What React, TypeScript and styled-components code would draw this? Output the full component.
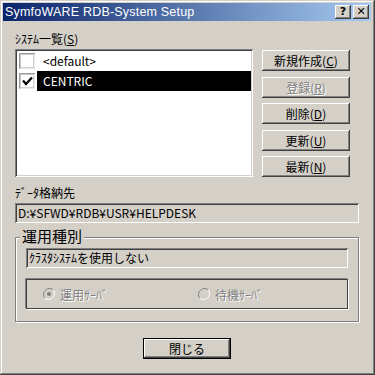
import React from "react";
import styled, { createGlobalStyle } from "styled-components";

const Global = createGlobalStyle`
  html, body {
    margin: 0;
    padding: 0;
    background: #d4d0c8;
  }
  body {
    font-family: "Noto Sans CJK JP", sans-serif;
    font-size: 12px;
  }
`;

const face = `"Noto Sans CJK JP", "Liberation Sans", sans-serif`;

const Window = styled.div`
  width: 375px;
  height: 375px;
  box-sizing: border-box;
  padding: 3px 4px 4px 3px;
  background: #d4d0c8;
  box-shadow: inset -1px -1px #404040, inset 1px 1px #d4d0c8,
    inset -2px -2px #808080, inset 2px 2px #fff;
  display: flex;
  flex-direction: column;
`;

const TitleBar = styled.div`
  height: 18px;
  display: flex;
  align-items: center;
  padding: 0 2px 0 2px;
  background: linear-gradient(to right, #0a246a, #a6caf0);
`;

const TitleText = styled.div`
  flex: 1;
  color: #fff;
  font-family: "Liberation Sans", sans-serif;
  font-size: 12.5px;
  line-height: 18px;
  letter-spacing: 0.2px;
`;

const TitleButton = styled.div`
  width: 16px;
  height: 14px;
  margin-left: 2px;
  background: #d4d0c8;
  box-shadow: inset -1px -1px #404040, inset 1px 1px #fff,
    inset -2px -2px #808080;
  display: flex;
  align-items: center;
  justify-content: center;
  font-family: "DejaVu Sans", sans-serif;
  font-weight: bold;
  font-size: 11px;
  line-height: 14px;
  color: #000;
`;

const Body = styled.div`
  display: flex;
  flex-direction: column;
  padding: 0 9px 0 12px;
`;

const Label = styled.div<{ $top: number }>`
  margin-top: ${(p) => p.$top}px;
  height: 16px;
  line-height: 16px;
  font-family: ${face};
  font-size: 12px;
  color: #000;
`;

const Row = styled.div`
  display: flex;
  align-items: flex-start;
  height: 128px;
  margin-top: 2px;
`;

const ListBox = styled.div`
  width: 238px;
  height: 128px;
  box-sizing: border-box;
  padding: 2px;
  background: #fff;
  box-shadow: inset 1px 1px #808080, inset -1px -1px #fff,
    inset 2px 2px #404040, inset -2px -2px #d4d0c8;
`;

const ListItem = styled.div`
  height: 20px;
  display: flex;
  align-items: center;
  padding-left: 2px;
`;

const CheckBox = styled.div`
  width: 16px;
  height: 16px;
  box-sizing: border-box;
  background: #fff;
  box-shadow: inset 1px 1px #9a9a9a, inset -1px -1px #e8e8e8,
    inset 2px 2px #c8c8c8, inset -2px -2px #d4d0c8;
  display: flex;
  align-items: center;
  justify-content: center;
`;

const ItemText = styled.div<{ $selected?: boolean }>`
  flex: 1;
  margin-left: 2px;
  height: 20px;
  line-height: 20px;
  padding-left: 6px;
  font-family: ${face};
  font-size: 12px;
  background: ${(p) => (p.$selected ? "#000" : "transparent")};
  color: ${(p) => (p.$selected ? "#fff" : "#000")};
`;

const ButtonColumn = styled.div`
  display: flex;
  flex-direction: column;
  gap: 5.5px;
  margin-left: 9px;
  padding-top: 1px;
`;

const Button = styled.div<{ $disabled?: boolean; $default?: boolean }>`
  width: 88px;
  height: 21px;
  box-sizing: border-box;
  background: #d4d0c8;
  display: flex;
  align-items: center;
  justify-content: center;
  font-family: ${face};
  font-size: 12px;
  color: ${(p) => (p.$disabled ? "#808080" : "#000")};
  text-shadow: ${(p) => (p.$disabled ? "1px 1px #fff" : "none")};
  box-shadow: ${(p) =>
    p.$default
      ? "inset 0 0 0 1px #000, inset -2px -2px #404040, inset 2px 2px #fff, inset -3px -3px #808080"
      : "inset -1px -1px #404040, inset 1px 1px #fff, inset -2px -2px #808080"};
`;

const Field = styled.div`
  height: 20px;
  box-sizing: border-box;
  padding-left: 3px;
  line-height: 20px;
  font-family: ${face};
  font-size: 12px;
  color: #000;
  background: #d4d0c8;
  box-shadow: inset 1px 1px #808080, inset -1px -1px #fff,
    inset 2px 2px #404040, inset -2px -2px #d4d0c8;
`;

const PathField = styled(Field)`
  margin-top: 2px;
  width: 344px;
`;

const Group = styled.div`
  position: relative;
  margin-top: 14px;
  width: 344px;
  height: 85px;
  box-sizing: border-box;
  padding: 11px 11px 0 11px;
  box-shadow: inset 1px 1px #808080, inset -1px -1px #808080,
    inset 2px 2px #fff, 1px 1px #fff;
  display: flex;
  flex-direction: column;
`;

const Legend = styled.div`
  position: absolute;
  top: -10px;
  left: 5px;
  padding: 0 2px;
  background: #d4d0c8;
  font-family: ${face};
  font-size: 15px;
  line-height: 18px;
  color: #000;
`;

const RadioPanel = styled.div`
  margin-top: 11px;
  height: 30px;
  box-sizing: border-box;
  border: 1px solid #404040;
  box-shadow: -1px -1px #808080, 1px 1px #fff;
  display: flex;
  align-items: center;
  padding-left: 16px;
`;

const Radio = styled.div<{ $width: number }>`
  width: ${(p) => p.$width}px;
  display: flex;
  align-items: center;
  gap: 5px;
  font-family: ${face};
  font-size: 12px;
  color: #808080;
  text-shadow: 1px 1px #fff;
`;

const Footer = styled.div`
  display: flex;
  justify-content: center;
  margin-top: 16px;
  padding-right: 3px;
`;

const CheckMark = () => (
  <svg width="11" height="10" viewBox="0 0 11 10">
    <polyline points="1,4.5 4,8 10,1.5" fill="none" stroke="#000" strokeWidth="2.2" />
  </svg>
);

const RadioDot = ({ checked }: { checked?: boolean }) => (
  <svg width="12" height="12" viewBox="0 0 12 12">
    <path d="M10.2 1.8 A6 6 0 0 0 1.8 10.2" fill="none" stroke="#808080" strokeWidth="1" />
    <path d="M1.8 10.2 A6 6 0 0 0 10.2 1.8" fill="none" stroke="#fff" strokeWidth="1" />
    <circle cx="6" cy="6" r="4.5" fill="#d4d0c8" />
    {checked && <circle cx="6" cy="6" r="2" fill="#808080" />}
  </svg>
);

const items = [
  { name: "<default>", checked: false, selected: false },
  { name: "CENTRIC", checked: true, selected: true },
];

const actions = [
  { text: "新規作成(", key: "C" },
  { text: "登録(", key: "R", disabled: true },
  { text: "削除(", key: "D" },
  { text: "更新(", key: "U" },
  { text: "最新(", key: "N" },
];

const App = () => {
  return (
    <Window>
      <Global />
      <TitleBar>
        <TitleText>SymfoWARE RDB-System Setup</TitleText>
        <TitleButton>?</TitleButton>
        <TitleButton>✕</TitleButton>
      </TitleBar>
      <Body>
        <Label $top={10}>
          ｼｽﾃﾑ一覧(<u>S</u>)
        </Label>
        <Row>
          <ListBox>
            {items.map((item) => (
              <ListItem key={item.name}>
                <CheckBox>{item.checked && <CheckMark />}</CheckBox>
                <ItemText $selected={item.selected}>{item.name}</ItemText>
              </ListItem>
            ))}
          </ListBox>
          <ButtonColumn>
            {actions.map((a) => (
              <Button key={a.key} $disabled={a.disabled}>
                {a.text}
                <u>{a.key}</u>)
              </Button>
            ))}
          </ButtonColumn>
        </Row>
        <Label $top={8}>ﾃﾞｰﾀ格納先</Label>
        <PathField>D:¥SFWD¥RDB¥USR¥HELPDESK</PathField>
        <Group>
          <Legend>運用種別</Legend>
          <Field>ｸﾗｽﾀｼｽﾃﾑを使用しない</Field>
          <RadioPanel>
            <Radio $width={155}>
              <RadioDot checked />
              運用ｻｰﾊﾞ
            </Radio>
            <Radio $width={120}>
              <RadioDot />
              待機ｻｰﾊﾞ
            </Radio>
          </RadioPanel>
        </Group>
        <Footer>
          <Button $default>閉じる</Button>
        </Footer>
      </Body>
    </Window>
  );
};

export default App;
